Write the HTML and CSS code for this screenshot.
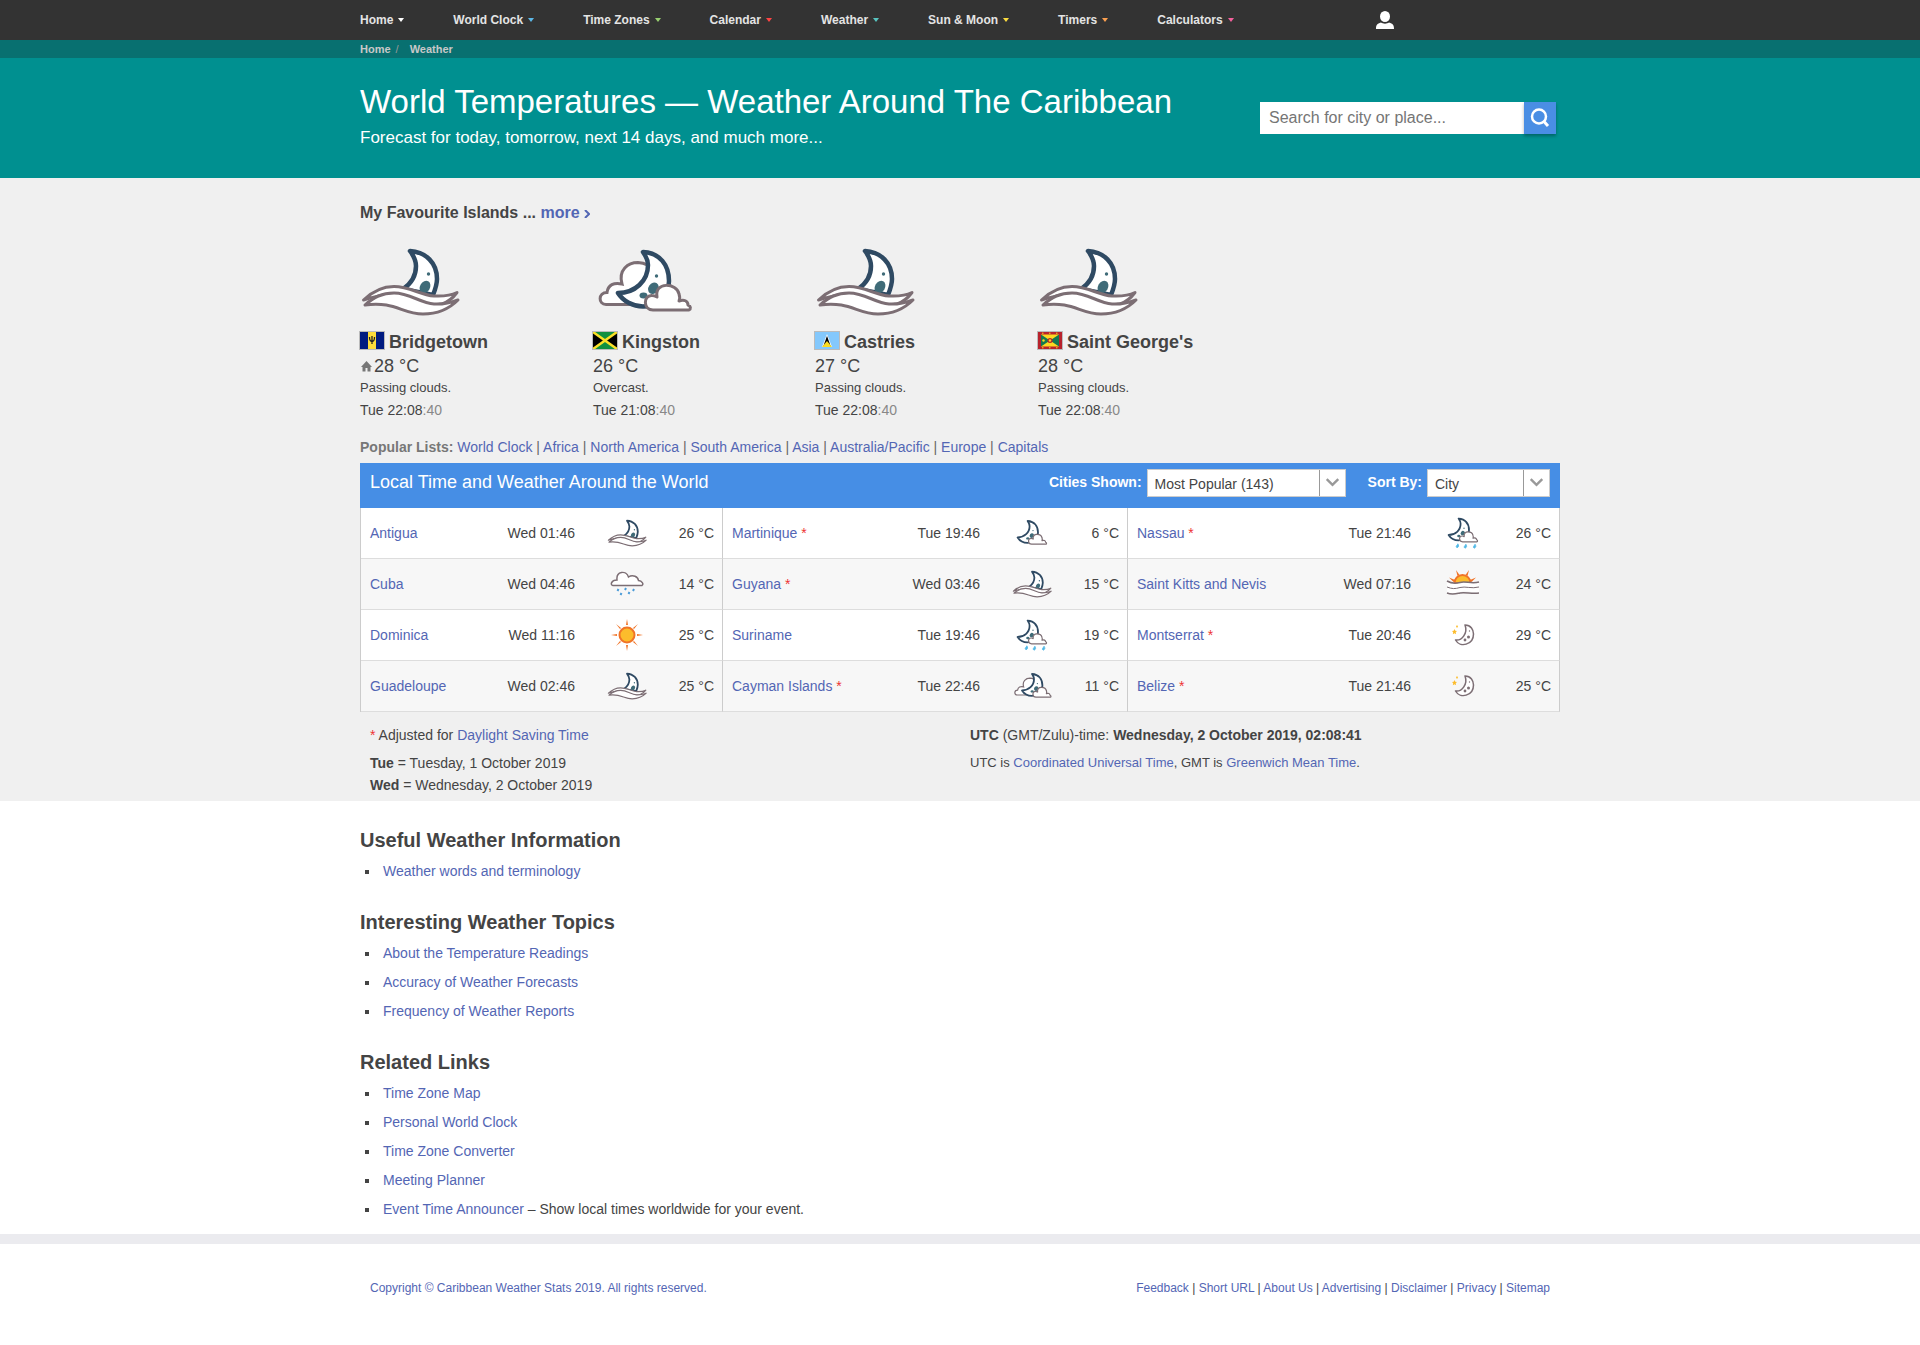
FILE: index.html
```html
<!DOCTYPE html>
<html lang="en">
<head>
<meta charset="utf-8">
<meta name="viewport" content="width=device-width, initial-scale=1">
<title>World Temperatures — Weather Around The Caribbean</title>
<link rel="stylesheet" href="styles.css">
</head>
<body>
<svg class="sprite" aria-hidden="true">
  <symbol id="passing" viewBox="0 0 100 70">
    <path d="M50 4C66 5 77 16 77 32C77 38 75 43 73 48L43 42C52 36 56 28 56 19C56 13 53 8 50 4Z" fill="#fff" stroke="#2f4a63" stroke-width="4.5" stroke-linejoin="round"/>
    <circle cx="68.500" cy="27" r="1.700" fill="#3f6b78"/>
    <ellipse cx="65" cy="40" rx="5" ry="6.500" transform="rotate(30 65 40)" fill="#3f6b78"/>
    <g fill="#fff" stroke="#7c6e74" stroke-width="3" stroke-linejoin="round">
      <path d="M3.500 53C14 43 24 39.500 34 39.500C50 39.500 60 48 74 49C84 49.500 90 49 97 45.500C93 51 88 55 82 57C60 62 45 50 33 47C20 48 12 50 3.500 53Z"/>
      <path d="M5 58C14 50 22 46 34 46C50 46 60 56 74 57C84 57.500 90 56 98 53C90 61 80 67 63 67C42 67 35 54 5 58Z"/>
    </g>
  </symbol>
  <symbol id="moon-cloud" viewBox="0 0 100 70">
    <path d="M50 5C67 6 76 18 76 34C76 50 64 59.500 50 59.500C40 59.500 30 54 25 46C42 46 55 34 55 18C55 12 52 8 50 5Z" fill="#fff" stroke="#2f4a63" stroke-width="4.500" stroke-linejoin="round"/>
    <g fill="#3f6b78"><circle cx="63.500" cy="29" r="1.700"/><ellipse cx="60.500" cy="41" rx="5" ry="6" transform="rotate(35 60 41)"/><ellipse cx="50.500" cy="48.500" rx="4" ry="3"/></g>
    <path d="M60 63C50 63 50 48 59 48.500C61 48.500 62 49 64 50C61 34 84 36 86 47C87 50 87 52 86 54C91 52 95 54 95 58C98 59 98 62 96 63Z" fill="#fff" stroke="#7c6e74" stroke-width="3" stroke-linejoin="round"/>
  </symbol>
  <symbol id="overcast" viewBox="0 0 100 70">
    <path d="M13 57.500C5 57.500 5 45.500 14 45.500C15 38 21 35 29 37C25 23 35 15.500 45 15.500C60 16 66 30 60 42L52 57.500Z" fill="#fff" stroke="#7c6e74" stroke-width="3"/>
    <use href="#moon-cloud" width="100" height="70"/>
  </symbol>
  <symbol id="night-cloud" viewBox="21 0 80 70"><use href="#moon-cloud" width="100" height="70"/></symbol>
  <symbol id="night-rain" viewBox="21 3 80 76">
    <use href="#moon-cloud" width="100" height="70"/>
    <path d="M46 78c-5-4 1-6 2-10c3 4 3 8-2 10zM66 79c-5-4 1-6 2-10c3 4 3 8-2 10zM89 79c-5-4 1-6 2-10c3 4 3 8-2 10z" fill="#50b8e6" stroke="#50b8e6" stroke-width="2"/>
  </symbol>
  <symbol id="rain" viewBox="0 0 34 26">
    <path d="M3 14.500C0 14 1 9 7 9C6 0 16-1 18.500 6C23 3 28 6 28.500 9.500C32 10 34 13 32 14.500Z" fill="#fff" stroke="#7c6e74" stroke-width="1.500"/>
    <path d="M8.500 18l-1 2M11.500 22l-1 2M16 17l-1 2M19.500 21l-1 2M24 18l-1 2" stroke="#4a9bd8" stroke-width="2"/>
  </symbol>
  <symbol id="sun" viewBox="0 0 32 32">
    <path d="M16 0l1 6h-2zM16 32l1-6h-2zM0 16l6 1v-2zM32 16l-6 1v-2zM5 5l5 4-1 1zM27 5l-5 4 1 1zM5 27l5-4-1-1zM27 27l-5-4 1-1z" fill="#f07428"/>
    <circle cx="16" cy="16" r="7.500" fill="#fcbc2c" stroke="#f07428" stroke-width="2"/>
  </symbol>
  <symbol id="sunrise" viewBox="0 0 34 30">
    <path d="M10 1l3.500 5-2 1zM23 1l-3.500 5 2 1zM3 8.500l6 2.500-1.500 2zM30 8.500l-6 2.500 1.500 2z" fill="#f07428"/>
    <path d="M8.500 14a8 8 0 0 1 16 0z" fill="#fcbc2c" stroke="#f07428" stroke-width="2"/>
    <path d="M1 12C6 15 9 15 14 13.500C20 12 26 15 33 13V23C26 25 22 21 17 22C12 24 7 26 1 23Z" fill="#fff"/>
    <path d="M1 12C6 15 9 15 14 13.500S26 15 33 13M1 24C6 26 9 25 14 24S26 25 33 24" fill="none" stroke="#7c6e74" stroke-width="1.500"/>
    <path d="M1 18C6 20 9 20 14 18.500S26 20 33 18" fill="none" stroke="#7c6e74" stroke-width="1"/>
  </symbol>
  <symbol id="clear-night" viewBox="0 0 24 24">
    <path d="M14 2C20 2 22.500 7 22.500 11C22.500 22 9 25 4.500 17C11 18 17 10 14 2Z" fill="#fff" stroke="#7c6e74" stroke-width="1.500" stroke-linejoin="round"/>
    <g fill="#7c6e74"><circle cx="17.500" cy="14" r="1.500"/><circle cx="14" cy="17" r="1.400"/><circle cx="18.500" cy="8" r=".7"/></g>
    <path d="M3.500 6l.8 1.700 1.700.3-1.300 1.300.4 2-1.600-1-1.700 1 .4-2L1 8l1.700-.3zM6 2l1 1.500-1 1.500-1-1.500z" fill="#fcbc2c"/>
  </symbol>
</svg>

<nav class="topnav">
  <div class="wrap topnav-row">
    <ul class="menu">
      <li><a href="#">Home</a><i class="caret c-white"></i></li>
      <li><a href="#">World Clock</a><i class="caret c-blue"></i></li>
      <li><a href="#">Time Zones</a><i class="caret c-green"></i></li>
      <li><a href="#">Calendar</a><i class="caret c-red"></i></li>
      <li><a href="#">Weather</a><i class="caret c-teal"></i></li>
      <li><a href="#">Sun &amp; Moon</a><i class="caret c-yellow"></i></li>
      <li><a href="#">Timers</a><i class="caret c-orange"></i></li>
      <li><a href="#">Calculators</a><i class="caret c-pink"></i></li>
    </ul>
    <a class="account" href="#" aria-label="My Account"><svg width="18" height="18" viewBox="0 0 18 18"><ellipse cx="9" cy="5.500" rx="5" ry="5.500" fill="#fff"/><path d="M0 18C0 14 1 12.500 5 11.500C7 13 11 13 13 11.500C17 12.500 18 14 18 18Z" fill="#fff"/></svg></a>
  </div>
</nav>

<div class="crumbs">
  <div class="wrap"><a href="#">Home</a><span class="slash">/</span><a href="#">Weather</a></div>
</div>

<header class="banner">
  <div class="wrap banner-row">
    <div>
      <h1>World Temperatures — Weather Around The Caribbean</h1>
      <p>Forecast for today, tomorrow, next 14 days, and much more...</p>
    </div>
    <form class="search">
      <input type="text" placeholder="Search for city or place..." aria-label="Search for city or place">
      <button type="button" aria-label="Search"><svg width="20" height="20" viewBox="0 0 20 20"><circle cx="9" cy="8.500" r="7" fill="none" stroke="#fff" stroke-width="2.500"/><path d="M13.500 13l4.500 5" stroke="#fff" stroke-width="3"/></svg></button>
    </form>
  </div>
</header>

<main>
  <section class="weather">
    <div class="wrap">
      <h2 class="fav-title">My Favourite Islands ... <a href="#">more <svg width="6" height="8" viewBox="0 0 6 8"><path d="M1 0l4 4-4 4" fill="none" stroke="currentColor" stroke-width="2"/></svg></a></h2>
      <div class="favs">
        <article>
          <svg class="big" aria-hidden="true"><use href="#passing"/></svg>
          <h3><svg class="flag" viewBox="0 0 24 17"><path fill="#001b80" d="M0 0h24v17H0z"/><path fill="#fcdc3c" d="M8 0h8v17H8z"/><path d="M12 4v8M9.500 5c0 3 .5 4.500 2.500 4.500S14.500 8 14.500 5" fill="none" stroke="#222" stroke-width="1.300"/></svg>Bridgetown</h3>
          <p class="temp"><svg class="house" viewBox="0 0 12 12"><path d="M6.500 1L1 7h1.500v4.500h3V8h2v3.500h3V7H12z" fill="#777"/></svg>28 °C</p>
          <p class="cond">Passing clouds.</p>
          <p class="time">Tue 22:08<span>:40</span></p>
        </article>
        <article>
          <svg class="big" aria-hidden="true"><use href="#overcast"/></svg>
          <h3><svg class="flag" viewBox="0 0 24 17"><path fill="#109040" d="M0 0h24v17H0z"/><path d="M0 0l12 8.500L0 17zM24 0L12 8.500 24 17z"/><path d="M0 0l24 17M24 0L0 17" stroke="#fbe028" stroke-width="2.500"/></svg>Kingston</h3>
          <p class="temp">26 °C</p>
          <p class="cond">Overcast.</p>
          <p class="time">Tue 21:08<span>:40</span></p>
        </article>
        <article>
          <svg class="big" aria-hidden="true"><use href="#passing"/></svg>
          <h3><svg class="flag" viewBox="0 0 24 17"><path fill="#84c8fc" d="M0 0h24v17H0z"/><path d="M12 2l5 13H7z" fill="#fff"/><path d="M12 4l4 11H8z"/><path d="M12 9l5 6H7z" fill="#fcdc20"/></svg>Castries</h3>
          <p class="temp">27 °C</p>
          <p class="cond">Passing clouds.</p>
          <p class="time">Tue 22:08<span>:40</span></p>
        </article>
        <article>
          <svg class="big" aria-hidden="true"><use href="#passing"/></svg>
          <h3><svg class="flag" viewBox="0 0 24 17"><path fill="#b8222c" d="M0 0h24v17H0z"/><path fill="#fcd820" d="M3 2.500h18v12H3z"/><path fill="#147850" d="M3 2.500l9 6-9 6zM21 2.500l-9 6 9 6z"/><circle cx="12" cy="8.500" r="2.500" fill="#b8222c"/><circle cx="12" cy="8.500" r="1.200" fill="#fcd820"/><circle cx="5.500" cy="8.500" r="1.200" fill="#fcd820"/><path d="M4 1.200h16M4 15.800h16" stroke="#fcd820" stroke-dasharray="1.500 5.500"/></svg>Saint George's</h3>
          <p class="temp">28 °C</p>
          <p class="cond">Passing clouds.</p>
          <p class="time">Tue 22:08<span>:40</span></p>
        </article>
      </div>

      <p class="popular"><b>Popular Lists:</b> <a href="#">World Clock</a> | <a href="#">Africa</a> | <a href="#">North America</a> | <a href="#">South America</a> | <a href="#">Asia</a> | <a href="#">Australia/Pacific</a> | <a href="#">Europe</a> | <a href="#">Capitals</a></p>

      <div class="table-head">
        <h2>Local Time and Weather Around the World</h2>
        <div class="field">
          <label for="shown">Cities Shown:</label>
          <span class="drop drop-wide"><select id="shown"><option>Most Popular (143)</option></select><svg viewBox="0 0 26 26"><path d="M7 9l6 6 6-6" fill="none" stroke="#999" stroke-width="2.500"/></svg></span>
        </div>
        <div class="field">
          <label for="sort">Sort By:</label>
          <span class="drop"><select id="sort"><option>City</option></select><svg viewBox="0 0 26 26"><path d="M7 9l6 6 6-6" fill="none" stroke="#999" stroke-width="2.500"/></svg></span>
        </div>
      </div>
      <table class="cities">
        <colgroup>
          <col class="w-name1"><col class="w-time"><col class="w-icon"><col class="w-temp">
          <col class="w-name2"><col class="w-time"><col class="w-icon"><col class="w-temp">
          <col class="w-name3"><col class="w-time"><col class="w-icon"><col class="w-last">
        </colgroup>
        <tbody>
          <tr>
            <td><a href="#">Antigua</a></td><td>Wed 01:46</td><td><svg class="wave"><use href="#passing"/></svg></td><td>26 °C</td>
            <td><a href="#">Martinique</a> <i>*</i></td><td>Tue 19:46</td><td><svg class="small"><use href="#night-cloud"/></svg></td><td>6 °C</td>
            <td><a href="#">Nassau</a> <i>*</i></td><td>Tue 21:46</td><td><svg class="small"><use href="#night-rain"/></svg></td><td>26 °C</td>
          </tr>
          <tr>
            <td><a href="#">Cuba</a></td><td>Wed 04:46</td><td><svg class="cloud"><use href="#rain"/></svg></td><td>14 °C</td>
            <td><a href="#">Guyana</a> <i>*</i></td><td>Wed 03:46</td><td><svg class="wave"><use href="#passing"/></svg></td><td>15 °C</td>
            <td><a href="#">Saint Kitts and Nevis</a></td><td>Wed 07:16</td><td><svg class="dawn"><use href="#sunrise"/></svg></td><td>24 °C</td>
          </tr>
          <tr>
            <td><a href="#">Dominica</a></td><td>Wed 11:16</td><td><svg class="small"><use href="#sun"/></svg></td><td>25 °C</td>
            <td><a href="#">Suriname</a></td><td>Tue 19:46</td><td><svg class="small"><use href="#night-rain"/></svg></td><td>19 °C</td>
            <td><a href="#">Montserrat</a> <i>*</i></td><td>Tue 20:46</td><td><svg class="moon"><use href="#clear-night"/></svg></td><td>29 °C</td>
          </tr>
          <tr>
            <td><a href="#">Guadeloupe</a></td><td>Wed 02:46</td><td><svg class="wave"><use href="#passing"/></svg></td><td>25 °C</td>
            <td><a href="#">Cayman Islands</a> <i>*</i></td><td>Tue 22:46</td><td><svg class="wave"><use href="#overcast"/></svg></td><td>11 °C</td>
            <td><a href="#">Belize</a> <i>*</i></td><td>Tue 21:46</td><td><svg class="moon"><use href="#clear-night"/></svg></td><td>25 °C</td>
          </tr>
        </tbody>
      </table>

      <div class="notes">
        <div>
          <p class="lead"><span class="star">*</span> Adjusted for <a href="#">Daylight Saving Time</a></p>
          <p><b>Tue</b> = Tuesday, 1 October 2019</p>
          <p><b>Wed</b> = Wednesday, 2 October 2019</p>
        </div>
        <div>
          <p class="lead"><b>UTC</b> (GMT/Zulu)-time: <b>Wednesday, 2 October 2019, 02:08:41</b></p>
          <p class="fine">UTC is <a href="#">Coordinated Universal Time</a>, GMT is <a href="#">Greenwich Mean Time</a>.</p>
        </div>
      </div>
    </div>
  </section>

  <section class="wrap info">
    <h2>Useful Weather Information</h2>
    <ul>
      <li><a href="#">Weather words and terminology</a></li>
    </ul>
    <h2>Interesting Weather Topics</h2>
    <ul>
      <li><a href="#">About the Temperature Readings</a></li>
      <li><a href="#">Accuracy of Weather Forecasts</a></li>
      <li><a href="#">Frequency of Weather Reports</a></li>
    </ul>
    <h2>Related Links</h2>
    <ul>
      <li><a href="#">Time Zone Map</a></li>
      <li><a href="#">Personal World Clock</a></li>
      <li><a href="#">Time Zone Converter</a></li>
      <li><a href="#">Meeting Planner</a></li>
      <li><a href="#">Event Time Announcer</a> – Show local times worldwide for your event.</li>
    </ul>
  </section>
</main>

<footer class="footer">
  <div class="wrap footer-row">
    <a href="#">Copyright © Caribbean Weather Stats 2019. All rights reserved.</a>
    <p><a href="#">Feedback</a> | <a href="#">Short URL</a> | <a href="#">About Us</a> | <a href="#">Advertising</a> | <a href="#">Disclaimer</a> | <a href="#">Privacy</a> | <a href="#">Sitemap</a></p>
  </div>
</footer>
</body>
</html>
```
FILE: styles.css
```css
* { box-sizing: border-box; }

body {
  margin: 0;
  background: #fff;
  color: #444;
  font: 14px/22px "Liberation Sans", Arial, sans-serif;
}

h1, h2, h3, p, ul { margin: 0; padding: 0; }
a { color: #5366b4; text-decoration: none; }
a:hover { text-decoration: underline; }

.sprite { display: none; }
.wrap { max-width: 1200px; margin: 0 auto; }

/* Top navigation */
.topnav { background: #333; }
.topnav-row { display: flex; align-items: center; height: 40px; }
.menu { display: flex; gap: 49px; width: 1016px; list-style: none; }
.menu li { display: flex; align-items: center; gap: 5px; }
.menu a { color: #e4e4e4; font-size: 12px; font-weight: bold; line-height: 16px; }
.caret { border: solid transparent; border-width: 4px 3px 0; }
.c-white { border-top-color: #fff; }
.c-blue { border-top-color: #5cb8e8; }
.c-green { border-top-color: #98d070; }
.c-red { border-top-color: #f44; }
.c-teal { border-top-color: #58c4c0; }
.c-yellow { border-top-color: #fcdc40; }
.c-orange { border-top-color: #fca050; }
.c-pink { border-top-color: #f4609c; }
.account { display: flex; }

.crumbs { background: #087070; font-size: 11px; font-weight: bold; line-height: 18px; }
.crumbs a { color: #c8c8c8; }
.slash { margin: 0 11px 0 5px; color: #999; font-weight: normal; }

/* Page banner */
.banner { background: #009090; color: #fff; }
.banner-row { display: flex; justify-content: space-between; padding: 24px 4px 24px 0; min-height: 120px; }
.banner h1 { font-size: 33px; font-weight: normal; line-height: 40px; }
.banner p { font-size: 17px; line-height: 32px; }
.search { display: flex; width: 296px; height: 32px; margin-top: 20px; }
.search input { flex: 1; min-width: 0; border: 0; padding: 0 9px; font: 16px "Liberation Sans", Arial, sans-serif; }
.search input::placeholder { color: #757575; opacity: 1; }
.search button { display: flex; align-items: center; justify-content: center; width: 32px; border: 0; padding: 0; background: #4a8ee4; box-shadow: 0 2px 3px rgba(0, 0, 0, .3); }

/* Favourites */
.weather { background: #f0f0f0; padding: 24px 0 5px; }
.fav-title { font-size: 16px; line-height: 22px; }
.favs { display: grid; grid-template-columns: 233px 222px 223px 1fr; margin-top: 23px; }
.big { display: block; width: 100px; height: 70px; margin-bottom: 12px; }
.favs h3 { display: flex; align-items: center; gap: 5px; font-size: 18px; line-height: 26px; }
.flag { width: 24px; height: 17px; margin-bottom: 3px; box-shadow: 0 0 0 1px #bbb; }
.temp { display: flex; align-items: center; font-size: 18px; line-height: 22px; }
.house { width: 12px; height: 12px; margin-right: 2px; }
.cond { font-size: 13px; }
.time span { color: #888; }
.popular { margin-top: 15px; color: #666; }
.popular b { color: #777; }

/* City table */
.table-head { display: flex; align-items: flex-start; gap: 22px; margin-top: 5px; padding: 6px 10px 11px; background: #468ee5; color: #fff; }
.table-head h2 { flex: 1; font-size: 18px; font-weight: normal; line-height: 26px; }
.field { display: flex; gap: 5px; }
.field label { font-weight: bold; line-height: 26px; }
.drop { position: relative; width: 123px; height: 28px; }
.drop-wide { width: 199px; }
.drop select { appearance: none; width: 100%; height: 28px; border: 1px solid #ccc; border-radius: 0; padding: 2px 28px 0 7px; background: #fff; color: #444; font: 14px "Liberation Sans", Arial, sans-serif; }
.drop svg { position: absolute; top: 1px; right: 1px; width: 26px; height: 26px; border-left: 1px solid #999; pointer-events: none; }

.cities { width: 100%; table-layout: fixed; border-collapse: separate; border-spacing: 0; border-left: 1px solid #ccc; background: #fff; }
.w-name1 { width: 137px; }
.w-name2 { width: 180px; }
.w-name3 { width: 206px; }
.w-time { width: 86px; }
.w-icon { width: 85px; }
.w-temp { width: 54px; }
.w-last { width: 55px; }
.cities td { height: 51px; padding: 0 9px; border-bottom: 1px solid #ddd; text-align: right; white-space: nowrap; }
.cities td:nth-child(4n+1) { text-align: left; }
.cities td:nth-child(4n+3) { text-align: center; }
.cities td:nth-child(4n) { border-right: 1px solid #ccc; padding-right: 8px; }
.cities tr:nth-child(even) { background: #f7f7f7; }
.cities i, .star { color: #e33; font-style: normal; }
.cities svg { display: block; margin: 0 auto; }
.wave { width: 40px; height: 28px; }
.small { width: 32px; height: 32px; }
.cloud { width: 34px; height: 26px; }
.dawn { width: 34px; height: 30px; }
.moon { width: 24px; height: 24px; }

.notes { display: grid; grid-template-columns: 1fr 1fr; padding: 12px 10px 0; column-gap: 20px; }
.notes .lead { margin-bottom: 6px; }
.notes .fine { font-size: 13px; }

/* Link lists */
.info { padding: 3px 0 10px; }
.info h2 { padding-top: 21px; font-size: 20px; line-height: 30px; }
.info ul { list-style: none; padding-top: 2px; }
.info li { display: flex; align-items: center; white-space: pre-wrap; line-height: 29px; }
.info li::before { content: ""; width: 4px; height: 4px; margin: 0 14px 0 5px; background: #444; }

.footer { border-top: 10px solid #ebebef; padding: 33px 0 46px; font-size: 12px; }
.footer-row { display: flex; justify-content: space-between; padding: 0 10px; }
```
